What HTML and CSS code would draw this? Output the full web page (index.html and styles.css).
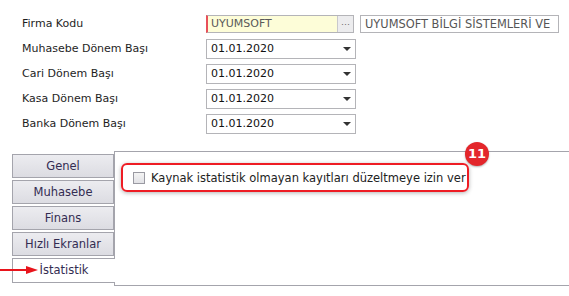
FILE: index.html
```html
<!DOCTYPE html>
<html lang="tr">
<head>
    <meta charset="UTF-8">
    <meta name="viewport" content="width=device-width, initial-scale=1.0">
    <title>Firma Parametreleri</title>
    <link rel="stylesheet" href="styles.css">
</head>
<body>
    <div class="form">
        <div class="row">
            <label class="label">Firma Kodu</label>
            <div class="lookup">
                <span class="lookup-value">UYUMSOFT</span>
                <button class="lookup-button">&middot;&middot;&middot;</button>
            </div>
            <div class="lookup-name">UYUMSOFT BİLGİ SİSTEMLERİ VE</div>
        </div>
        <div class="row">
            <label class="label">Muhasebe Dönem Başı</label>
            <div class="combo"><span>01.01.2020</span><span class="caret"></span></div>
        </div>
        <div class="row">
            <label class="label">Cari Dönem Başı</label>
            <div class="combo"><span>01.01.2020</span><span class="caret"></span></div>
        </div>
        <div class="row">
            <label class="label">Kasa Dönem Başı</label>
            <div class="combo"><span>01.01.2020</span><span class="caret"></span></div>
        </div>
        <div class="row">
            <label class="label">Banka Dönem Başı</label>
            <div class="combo"><span>01.01.2020</span><span class="caret"></span></div>
        </div>
    </div>

    <div class="tabs">
        <div class="tab-list">
            <div class="tab">Genel</div>
            <div class="tab">Muhasebe</div>
            <div class="tab">Finans</div>
            <div class="tab">Hızlı Ekranlar</div>
            <div class="tab active">İstatistik</div>
        </div>
        <div class="tab-panel">
            <div class="highlight">
                <span class="checkbox"></span>
                <span>Kaynak istatistik olmayan kayıtları düzeltmeye izin ver</span>
                <span class="badge">11</span>
            </div>
        </div>
        <svg class="pointer" width="40" height="10" viewBox="0 0 40 10">
            <line x1="0" y1="5" x2="28" y2="5" stroke="#e8141c" stroke-width="2"/>
            <polygon points="26,1 38,5 26,9" fill="#e8141c"/>
        </svg>
    </div>
</body>
</html>
```

FILE: styles.css
```css
body, html {
    margin: 0;
    padding: 0;
    background-color: #ffffff;
    font-family: "DejaVu Sans", Verdana, sans-serif;
    font-size: 11px;
    color: #1e1e1e;
    overflow: hidden;
}
.form {
    padding-top: 11px;
    padding-left: 22px;
}
.row {
    display: flex;
    align-items: center;
    height: 25px;
}
.label {
    width: 184px;
}
.lookup {
    display: flex;
    width: 148px;
    height: 18px;
    box-sizing: border-box;
    border: 1px solid #b4b4b8;
    border-left: 2px solid #e8505a;
    background-color: #fdfdd8;
}
.lookup-value {
    flex: 1;
    padding-left: 3px;
    line-height: 16px;
    color: #5a5a5a;
}
.lookup-button {
    width: 16px;
    padding: 0;
    border: none;
    border-left: 1px solid #c8c8cc;
    background-color: #ececee;
    color: #666;
    font-size: 9px;
    line-height: 16px;
}
.lookup-name {
    margin-left: 6px;
    width: 199px;
    height: 18px;
    box-sizing: border-box;
    border: 1px solid #b4b4b8;
    padding-left: 4px;
    line-height: 16px;
    font-size: 11.4px;
    color: #555;
    white-space: nowrap;
    overflow: hidden;
}
.combo {
    display: flex;
    align-items: center;
    justify-content: space-between;
    width: 150px;
    height: 20px;
    box-sizing: border-box;
    border: 1px solid #b4b4b8;
    padding: 0 4px 0 4px;
    color: #111;
}
.caret {
    width: 0;
    height: 0;
    border-left: 4px solid transparent;
    border-right: 4px solid transparent;
    border-top: 4px solid #333;
}
.tabs {
    position: relative;
    display: flex;
    margin-top: 15px;
    margin-left: 12px;
}
.tab-list {
    width: 102px;
    padding-top: 3px;
    position: relative;
    z-index: 1;
}
.tab {
    height: 24px;
    box-sizing: border-box;
    border: 1px solid #a4a4ac;
    margin-bottom: 2px;
    background: linear-gradient(#ececf0, #dcdce2);
    color: #332c52;
    font-size: 11.5px;
    line-height: 22px;
    text-align: center;
}
.tab.active {
    background: #ffffff;
    border-right: none;
    margin-right: -1px;
    height: 25px;
}
.tab-panel {
    flex: 1;
    height: 135px;
    box-sizing: border-box;
    border: 1px solid #a4a4ac;
    border-right: none;
    padding: 11px 0 0 6px;
}
.highlight {
    position: relative;
    display: flex;
    align-items: center;
    width: 348px;
    height: 29px;
    box-sizing: border-box;
    border: 2px solid #ee1c24;
    border-radius: 6px;
    box-shadow: 0 1px 4px rgba(0, 0, 0, 0.3);
    padding-left: 10px;
    color: #222;
    font-size: 11.5px;
    white-space: nowrap;
}
.checkbox {
    width: 10px;
    height: 10px;
    border: 1px solid #9a9aa2;
    background: linear-gradient(#f4f4f4, #e2e2e6);
    margin-right: 6px;
}
.badge {
    position: absolute;
    right: -22px;
    top: -23px;
    width: 24px;
    height: 24px;
    border-radius: 50%;
    background-color: #e3262b;
    color: #ffffff;
    font-weight: bold;
    font-size: 13px;
    line-height: 24px;
    text-align: center;
    box-shadow: 0 1px 2px rgba(0, 0, 0, 0.3);
}
.pointer {
    position: absolute;
    left: -12px;
    top: 114px;
    z-index: 2;
}
```
